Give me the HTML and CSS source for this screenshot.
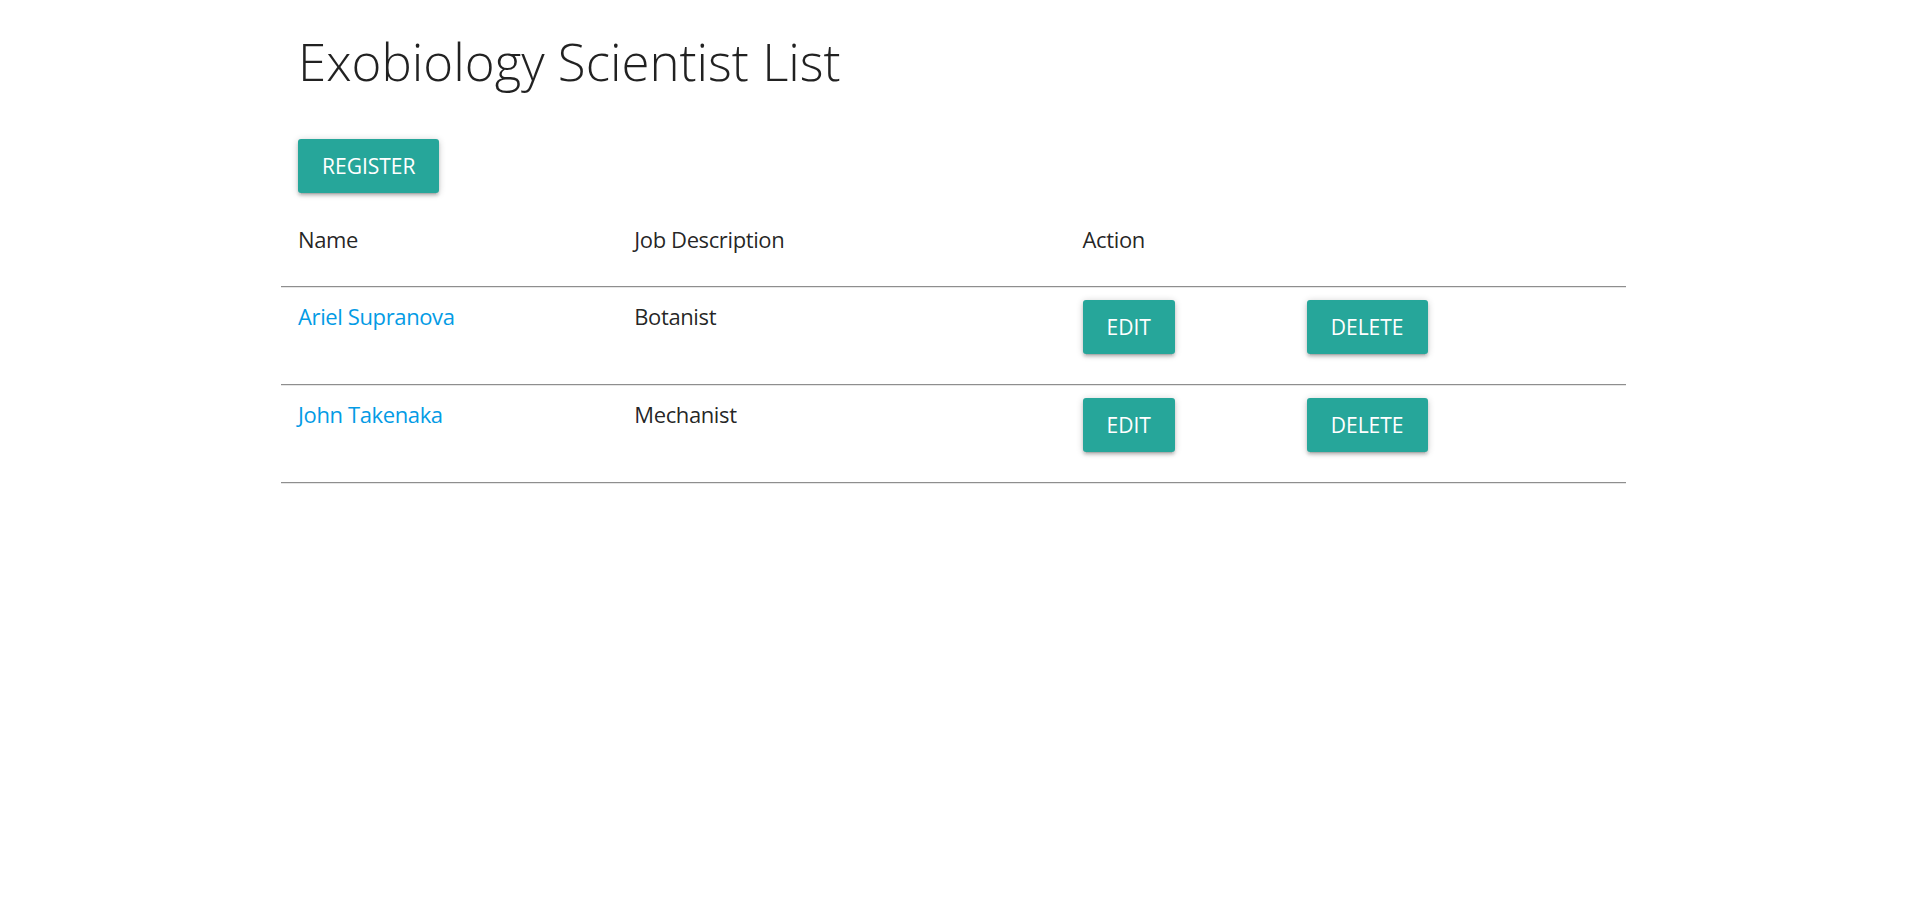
FILE: index.html
```html
<!DOCTYPE html>
<html lang="en">
<head>
<meta charset="utf-8">
<title>Exobiology Scientist List</title>
<link rel="stylesheet" href="styles.css">
</head>
<body>
<div class="container">
  <div class="intro">
    <h1 class="title">Exobiology Scientist List</h1>
    <div class="actions">
      <a class="btn" href="#">Register</a>
    </div>
  </div>
  <div class="row">
    <div class="cell">Name</div>
    <div class="cell">Job Description</div>
    <div class="cell">Action</div>
    <div class="cell"></div>
  </div>
  <hr class="divider">
  <div class="row">
    <div class="cell"><a class="link" href="#">Ariel Supranova</a></div>
    <div class="cell">Botanist</div>
    <div class="cell"><a class="btn" href="#">Edit</a></div>
    <div class="cell"><a class="btn" href="#">Delete</a></div>
  </div>
  <hr class="divider">
  <div class="row">
    <div class="cell"><a class="link" href="#">John Takenaka</a></div>
    <div class="cell">Mechanist</div>
    <div class="cell"><a class="btn" href="#">Edit</a></div>
    <div class="cell"><a class="btn" href="#">Delete</a></div>
  </div>
  <hr class="divider">
</div>
</body>
</html>
```
FILE: styles.css
```css
html, body {
  margin: 0;
  padding: 0;
  background: #ffffff;
}
body {
  font-family: "Open Sans", "Noto Sans", sans-serif;
  font-size: 22px;
  letter-spacing: -0.38px;
  line-height: 34px;
  color: rgba(0, 0, 0, 0.87);
}
.container {
  width: 1345px;
  margin: 0 auto;
}
.intro {
  padding: 0 17px;
}
.title {
  font-size: 51px;
  font-weight: 300;
  letter-spacing: 0;
  line-height: 56px;
  margin: 0;
  padding-top: 33px;
  padding-bottom: 50px;
}
.actions {
  padding-bottom: 29px;
}
.btn {
  display: inline-block;
  height: 54px;
  line-height: 54px;
  padding: 0 24px;
  font-size: 21px;
  letter-spacing: 0;
  text-transform: uppercase;
  color: #ffffff;
  background: #26a69a;
  text-decoration: none;
  border-radius: 3px;
  box-shadow: 0 3px 3px 0 rgba(0,0,0,0.14), 0 4px 1px -3px rgba(0,0,0,0.12), 0 1px 7px 0 rgba(0,0,0,0.2);
  vertical-align: top;
}
.row {
  display: grid;
  grid-template-columns: 3fr 4fr 2fr 3fr;
  margin-bottom: 30px;
}
.cell {
  padding: 0 17px;
  min-height: 34px;
}
.divider + .row .cell {
  line-height: 32px;
}
.divider + .row .cell .btn {
  line-height: 54px;
}
.link {
  color: #039be5;
  text-decoration: none;
}
.divider {
  margin: 0 0 12px 0;
  height: 0;
  border: 0;
  border-top: 1px solid #8e8e8e;
  border-bottom: 1px solid #e6e6e6;
}
```
